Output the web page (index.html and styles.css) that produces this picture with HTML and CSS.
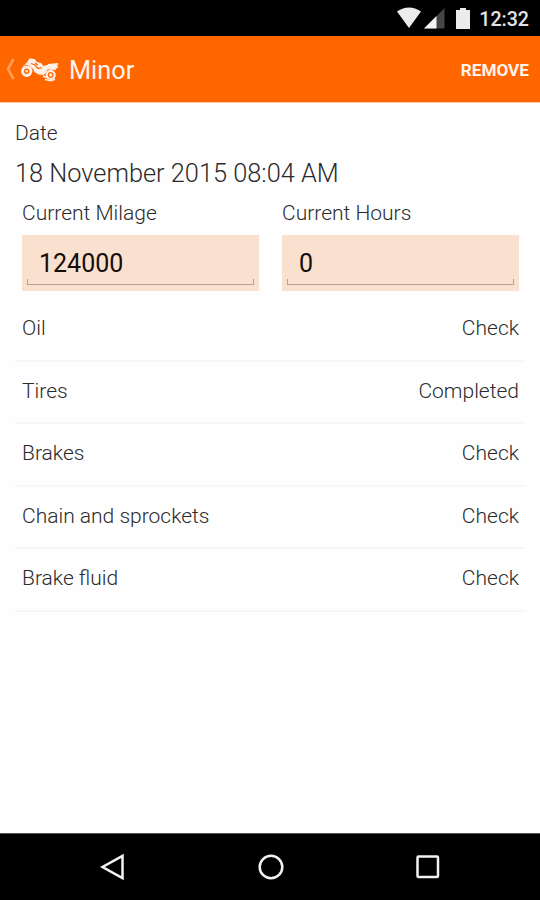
FILE: index.html
```html
<!DOCTYPE html>
<html lang="en">
<head>
  <meta charset="UTF-8">
  <meta name="viewport" content="width=device-width, initial-scale=1.0">
  <title>Minor</title>
  <link rel="stylesheet" href="styles.css">
</head>
<body>
  <div class="status-bar">
    <svg class="wifi" width="26" height="22" viewBox="0 0 26 22"><path d="M1 4.5Q13-3.5 25 4.5L13 21Z" fill="#ececec"/></svg>
    <svg class="signal" width="21" height="21" viewBox="0 0 21 21"><path d="M0 20.5 20.5 0v20.5Z" fill="#454545"/><path d="M0 20.5 12.5 8v12.5Z" fill="#f4f4f4"/></svg>
    <svg class="battery" width="14" height="21" viewBox="0 0 14 21"><path d="M4 0h6v2h4v19H0V2h4Z" fill="#ececec"/></svg>
    <span class="clock">12:32</span>
  </div>

  <header>
    <svg class="back" width="9" height="22" viewBox="0 0 9 22"><path d="M7.5 1 2 11l5.500 10" fill="none" stroke="#ffa059" stroke-width="2.600"/></svg>
    <svg class="bike" width="40" height="25" viewBox="0 0 40 25">
      <g fill="none" stroke="#fff0e5">
        <circle cx="6.700" cy="14.300" r="4.200" stroke-width="3"/>
        <circle cx="30.700" cy="18" r="4" stroke-width="2.200"/>
        <path d="M10 2.500 15 3M28 7.800l10-1M29 11l9-.8M23 19l4 1.500M25 22.500l6 1.200 4-1.500" stroke-width="1.500"/>
      </g>
      <g fill="#fff0e5">
        <circle cx="6.700" cy="14.300" r="1.300"/>
        <circle cx="30.700" cy="18" r="1.700"/>
        <path d="M2 9.500 6.500 6l3-4.500 5 .5 2.500 3 4 1 2.500 3 5-1.500 10 0-2 2.500-4 .5 4 .8-1 1.700-8-.5-1 3-3 2.500-5-.5-4-2.500-1.500-3-3.500-3-3.500-1.500Z"/>
      </g>
      <path d="m11 6.500 4 1.500 3 3.500 4-1M15 6l3 2" fill="none" stroke="#ff6600" stroke-width="1.200"/>
    </svg>
    <h1>Minor</h1>
    <button class="remove">REMOVE</button>
  </header>

  <main>
    <div class="date-label">Date</div>
    <div class="date-value">18 November 2015 08:04 AM</div>

    <div class="fields">
      <label class="field">
        <span>Current Milage</span>
        <span class="input-box"><input type="text" value="124000"></span>
      </label>
      <label class="field">
        <span>Current Hours</span>
        <span class="input-box"><input type="text" value="0"></span>
      </label>
    </div>

    <ul class="checklist">
      <li><span>Oil</span><span>Check</span></li>
      <li><span>Tires</span><span>Completed</span></li>
      <li><span>Brakes</span><span>Check</span></li>
      <li><span>Chain and sprockets</span><span>Check</span></li>
      <li><span>Brake fluid</span><span>Check</span></li>
    </ul>
  </main>

  <nav class="nav-bar">
    <svg width="28" height="28" viewBox="0 0 28 28"><path d="M23.500 2.800v22.400L3.500 14Z"/></svg>
    <svg width="28" height="28" viewBox="0 0 28 28"><circle cx="14" cy="14" r="11.300"/></svg>
    <svg width="28" height="28" viewBox="0 0 28 28"><rect x="3.500" y="3.500" width="20.500" height="20.500" rx="1"/></svg>
  </nav>
</body>
</html>
```

FILE: styles.css
```css
:root {
  --orange: #ff6600;
  --field: #fae0cf;
  --line: #f7f7f7;
}

* {
  box-sizing: border-box;
}

body {
  margin: 0;
  height: 900px;
  display: flex;
  flex-direction: column;
  font-family: Roboto, "Liberation Sans", sans-serif;
  font-size: 21px;
  font-weight: 300;
  color: #2b2b2b;
  background: #fefefe;
  overflow: hidden;
}

svg {
  display: block;
  flex-shrink: 0;
}

.status-bar {
  height: 36px;
  padding: 0 11px 0 0;
  display: flex;
  align-items: center;
  justify-content: flex-end;
  background: #000;
}

.signal {
  margin-left: 2px;
}

.battery {
  margin-left: 11px;
}

.clock {
  margin: 2px 0 0 9px;
  color: #e4e4e4;
  font-size: 19.600px;
  font-weight: 500;
}

header {
  height: 67px;
  padding: 0 11px 0 6px;
  display: flex;
  align-items: center;
  background: var(--orange);
  border-bottom: 1px solid #ffc9a5;
  color: #fff4ec;
}

.bike {
  margin-left: 5px;
}

h1 {
  margin: 3px 0 0 9px;
  font-size: 25.300px;
  font-weight: 400;
}

.remove {
  margin-left: auto;
  padding: 2px 0 0;
  border: none;
  background: none;
  color: inherit;
  font-family: inherit;
  font-size: 17.200px;
  font-weight: 700;
}

main {
  flex: 1;
  padding: 17px 14px 0 15px;
}

.date-label {
  line-height: 26px;
}

.date-value {
  margin-top: 11px;
  font-size: 25.350px;
  line-height: 32px;
}

.fields {
  padding: 11px 7px 0;
  display: grid;
  grid-template-columns: 1fr 1fr;
  gap: 23px;
}

.field {
  display: flex;
  flex-direction: column;
  line-height: 26px;
}

.input-box {
  height: 56px;
  margin-top: 9px;
  padding: 0 5px 6px;
  display: flex;
  background: var(--field);
}

.input-box input {
  width: 100%;
  padding: 6px 12px 0;
  border: none;
  outline: none;
  color: #150e0a;
  font-family: inherit;
  font-size: 25px;
  font-weight: 400;
  /* bottom line with short ticks at both ends */
  background:
    linear-gradient(#b5a195, #b5a195) bottom / 100% 1.500px no-repeat,
    linear-gradient(#b5a195, #b5a195) left bottom / 1px 6px no-repeat,
    linear-gradient(#b5a195, #b5a195) right bottom / 1px 6px no-repeat;
}

.checklist {
  margin: 8px 0 0;
  padding: 0;
  list-style: none;
}

.checklist li {
  height: 62.500px;
  padding: 0 7px 2px;
  display: flex;
  align-items: center;
  justify-content: space-between;
  border-bottom: 2px solid var(--line);
}

.nav-bar {
  height: 67px;
  padding: 0 98px 0 99px;
  display: flex;
  align-items: center;
  justify-content: space-between;
  background: #000;
  border-top: 1px solid #555;
}

.nav-bar svg {
  fill: none;
  stroke: #f2f2f2;
  stroke-width: 2.500;
}
```
